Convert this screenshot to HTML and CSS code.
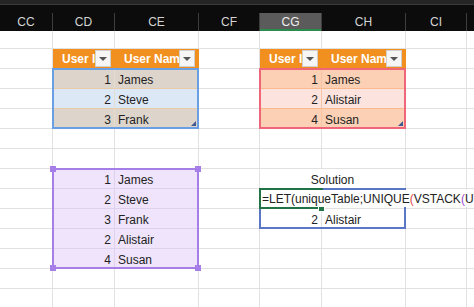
FILE: index.html
```html
<!DOCTYPE html>
<html lang="en">
<head>
  <meta charset="UTF-8">
  <title>Unique users</title>
  <link rel="stylesheet" href="styles.css">
</head>
<body>
<div class="app">
  <div class="ribbon"></div>

  <div class="sheet">
    <b class="col">CC</b><b class="col">CD</b><b class="col">CE</b><b class="col">CF</b><b class="col cur">CG</b><b class="col">CH</b><b class="col">CI</b><b class="col"></b>

    <span class="c"></span><span class="c"></span><span class="c"></span><span class="c"></span><span class="c"></span><span class="c"></span><span class="c"></span><span class="c"></span>

    <span class="c"></span>
    <span class="c head"><span class="hd-t">User ID</span><i class="dd"></i></span>
    <span class="c head"><span class="hd-t">User Name</span><i class="dd"></i></span>
    <span class="c"></span>
    <span class="c head"><span class="hd-t">User ID</span><i class="dd"></i></span>
    <span class="c head"><span class="hd-t">User Name</span><i class="dd"></i></span>
    <span class="c"></span><span class="c"></span>

    <span class="c"></span><span class="c num t1a">1</span><span class="c t1a">James</span><span class="c"></span><span class="c num t2a">1</span><span class="c t2a">James</span><span class="c"></span><span class="c"></span>
    <span class="c"></span><span class="c num t1b">2</span><span class="c t1b">Steve</span><span class="c"></span><span class="c num t2b">2</span><span class="c t2b">Alistair</span><span class="c"></span><span class="c"></span>
    <span class="c"></span><span class="c num t1a">3</span><span class="c t1a">Frank</span><span class="c"></span><span class="c num t2a">4</span><span class="c t2a">Susan</span><span class="c"></span><span class="c"></span>

    <span class="c"></span><span class="c"></span><span class="c"></span><span class="c"></span><span class="c"></span><span class="c"></span><span class="c"></span><span class="c"></span>
    <span class="c"></span><span class="c"></span><span class="c"></span><span class="c"></span><span class="c"></span><span class="c"></span><span class="c"></span><span class="c"></span>

    <span class="c"></span><span class="c num pu">1</span><span class="c pu">James</span><span class="c"></span><span class="c title">Solution</span><span class="c"></span><span class="c"></span>
    <span class="c"></span><span class="c num pu">2</span><span class="c pu">Steve</span><span class="c"></span><span class="c"></span><span class="c"></span><span class="c"></span><span class="c"></span>
    <span class="c"></span><span class="c num pu">3</span><span class="c pu">Frank</span><span class="c"></span><span class="c num">2</span><span class="c">Alistair</span><span class="c"></span><span class="c"></span>
    <span class="c"></span><span class="c num pu">2</span><span class="c pu">Alistair</span><span class="c"></span><span class="c"></span><span class="c"></span><span class="c"></span><span class="c"></span>
    <span class="c"></span><span class="c num pu">4</span><span class="c pu">Susan</span><span class="c"></span><span class="c"></span><span class="c"></span><span class="c"></span><span class="c"></span>

    <span class="c"></span><span class="c"></span><span class="c"></span><span class="c"></span><span class="c"></span><span class="c"></span><span class="c"></span><span class="c"></span>
    <span class="c"></span><span class="c"></span><span class="c"></span><span class="c"></span><span class="c"></span><span class="c"></span><span class="c"></span><span class="c"></span>
  </div>

  <!-- range frames drawn over the grid -->
  <div class="frame frame-t1"><i class="grip"></i></div>
  <div class="frame frame-t2"><i class="grip"></i></div>
  <div class="frame frame-pu">
    <i class="knob k-tl"></i><i class="knob k-tr"></i><i class="knob k-bl"></i><i class="knob k-br"></i>
  </div>
  <div class="frame frame-spill"></div>
  <div class="frame frame-active"></div>
  <i class="fill"></i>
  <div class="editor">=LET(uniqueTable;UNIQUE<b class="p1">(</b>VSTACK<b class="p2">(</b>U:U</div>
</div>
</body>
</html>
```

FILE: styles.css
```css
* { box-sizing: border-box; }
body {
  margin: 0;
  overflow: hidden;
  background: #fff;
  font-family: "Liberation Sans", Arial, sans-serif;
  font-size: 12px;
  color: #222;
}

.app {
  position: relative;
  width: 474px;
  height: 307px;
  overflow: hidden;
}

.ribbon {
  height: 13px;
  background: linear-gradient(#262626 0 4px, #3a3a3a 4px 5px, #0c0c0c 5px);
}

.sheet {
  display: grid;
  grid-template-columns: 53px 62px 84px 61px 62px 84px 61px 67px;
  grid-template-rows: 18px 18px repeat(13, 20px);
  width: 534px;
}

.col {
  background: #0c0c0c;
  color: #d4d4d4;
  font-weight: normal;
  line-height: 18px;
  text-align: center;
  border-right: 1px solid #3d3d3d;
}

.col.cur {
  background: #5b5b5b;
  color: #f0f0f0;
  box-shadow: inset 0 -2px #2b8a4e;
}

.c {
  padding: 4px 3px 0;
  line-height: 15px;
  border-right: 1px solid #e1e1e1;
  border-bottom: 1px solid #e1e1e1;
  white-space: nowrap;
  overflow: hidden;
}

.num { text-align: right; }
.title { grid-column: span 2; text-align: center; }

/* table headers */
.c.head {
  display: flex;
  align-items: center;
  padding: 1px 3px 0 9px;
  background: #f2901f;
  border-color: #f2901f;
  color: #fff;
  font-weight: bold;
}

.hd-t {
  flex: 1;
  min-width: 0;
  overflow: hidden;
}

.dd {
  position: relative;
  width: 16px;
  height: 17px;
  margin-top: -1px;
  background: #f6f6f6;
  border: 1px solid #cfcfcf;
}

.dd::after {
  content: "";
  position: absolute;
  left: 3px;
  top: 6px;
  border-left: 4px solid transparent;
  border-right: 4px solid transparent;
  border-top: 4px solid #555;
}

/* table body rows */
.t1a { background: #ddd5cb; border-bottom-color: #e9cba8; border-right-color: #e6dccf; }
.t1b { background: #dde8f6; border-bottom-color: #e9cba8; border-right-color: #e6dccf; }
.t2a { background: #fcd0b4; border-bottom-color: #f8b98e; border-right-color: #f9c3a2; }
.t2b { background: #fde3dd; border-bottom-color: #f8b98e; border-right-color: #f9c3a2; }
.pu { background: #efe4fb; border-bottom-color: #ddd1ec; border-right-color: #ddd1ec; }

/* frames over ranges */
.frame {
  position: absolute;
  border: 2px solid;
  pointer-events: none;
}

.frame-t1 { left: 52px; top: 68px; width: 147px; height: 61px; border-color: #6a9fe3; }
.frame-t2 { left: 259px; top: 68px; width: 147px; height: 61px; border-color: #ef6678; }
.frame-pu { left: 52px; top: 168px; width: 147px; height: 101px; border-color: #a67ee7; }
.frame-spill { left: 259px; top: 188px; width: 147px; height: 41px; border-color: #5a77c6; }
.frame-active { left: 259px; top: 188px; width: 64px; height: 21px; border-color: #217346; }

.grip {
  position: absolute;
  right: 1px;
  bottom: 1px;
  border-left: 5px solid transparent;
  border-bottom: 5px solid #3f5892;
}

.knob {
  position: absolute;
  width: 6px;
  height: 6px;
  background: #a67ee7;
}
.k-tl { left: -4px; top: -4px; }
.k-tr { right: -4px; top: -4px; }
.k-bl { left: -4px; bottom: -4px; }
.k-br { right: -4px; bottom: -4px; }

.fill {
  position: absolute;
  left: 319px;
  top: 206px;
  width: 5px;
  height: 5px;
  background: #217346;
  outline: 1px solid #fff;
}

.editor {
  position: absolute;
  left: 261px;
  top: 190px;
  right: 0;
  height: 17px;
  padding: 2px 0 0 1px;
  background: #fff;
  line-height: 15px;
  white-space: nowrap;
  overflow: hidden;
}

.editor b { font-weight: normal; }
.editor .p1 { color: #e5484d; }
.editor .p2 { color: #a24ccc; }
```
